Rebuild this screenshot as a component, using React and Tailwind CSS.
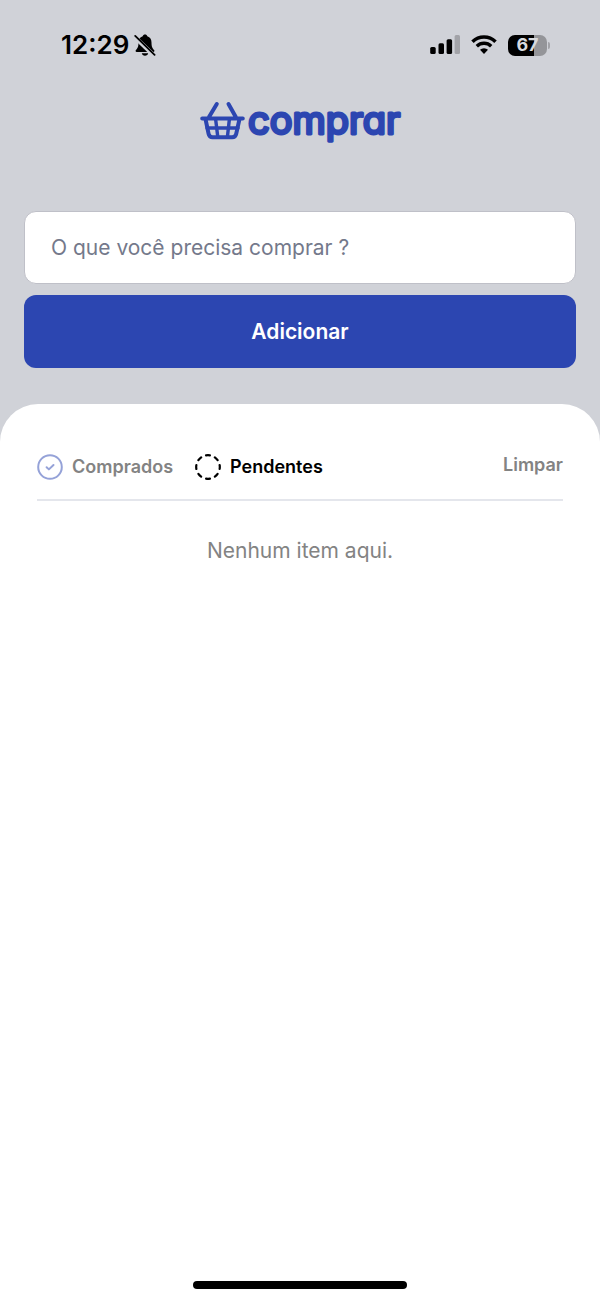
import { useState } from "react";

function MutedBell() {
  return (
    <svg width="22" height="24" viewBox="0 0 22 24" aria-hidden="true">
      <path d="M11 1.600c1.200 0 2 .7 2.300 1.700 2.900.9 4.200 3.200 4.200 6.200 0 4.600 1 5.800 2.600 7.600.7.9.300 1.900-.8 1.900H2.700c-1.100 0-1.500-1-.8-1.900 1.600-1.800 2.600-3 2.600-7.600 0-3 1.300-5.300 4.200-6.200.3-1 1.100-1.700 2.300-1.700z" />
      <path d="M7.800 20.300h6.400c-.2 1.400-1.500 2.500-3.200 2.500s-3-1.100-3.200-2.500z" />
      <path d="M0 3.200 20 22.600" stroke="#d0d2d8" strokeWidth="4.200" />
      <path d="M1.200 2.900 20.600 21.800" stroke="#000" strokeWidth="1.800" strokeLinecap="round" />
    </svg>
  );
}

function Signal() {
  return (
    <svg width="30" height="20" viewBox="0 0 30 20" aria-hidden="true">
      <rect x="0.200" y="12" width="5.500" height="7" rx="1.500" />
      <rect x="8.500" y="8.300" width="5.500" height="10.700" rx="1.500" />
      <rect x="16.600" y="4.200" width="5.500" height="14.800" rx="1.500" />
      <rect x="24.600" y="0" width="5.400" height="19" rx="1.500" fill="#a2a3a8" />
    </svg>
  );
}

function Wifi() {
  return (
    <svg width="26" height="20" viewBox="0 0 26 20" fill="none" stroke="#000" aria-hidden="true">
      <path d="M1.500 6.700a16.500 16.500 0 0 1 23 0" strokeWidth="3.600" />
      <path d="M5.800 11.200a10.300 10.300 0 0 1 14.400 0" strokeWidth="3.400" />
      <path d="M13 19l-4-4.200a5.700 5.700 0 0 1 8 0z" fill="#000" stroke="none" />
    </svg>
  );
}

function Battery() {
  return (
    <div className="flex items-center gap-px" role="img" aria-label="67%">
      <div className="flex h-[21px] w-[39px] items-center justify-center rounded-[7px] bg-linear-to-r from-black from-67% to-[#949599] to-67% font-bold text-lg leading-none text-[#d8dade]">
        67
      </div>
      <div className="h-[7px] w-[2px] rounded-r-full bg-[#a2a3a8]" />
    </div>
  );
}

function Basket() {
  return (
    <svg width="45" height="40" viewBox="0 0 45 40" fill="none" stroke="#2c46b1" strokeWidth="4" strokeLinecap="round" strokeLinejoin="round" aria-hidden="true">
      <path d="M16.800 3 9 16M28.500 3 35.800 16M2.200 17.600H42.800" />
      <path d="M5.500 18 8.600 32.800Q9.300 36.200 12.600 36.200H32.200Q35.500 36.200 36.200 32.800L39.500 18" />
      <path d="M15.600 18 17.800 36M29.400 18 27.400 36M7 27H38" strokeWidth="3.400" />
    </svg>
  );
}

function Wordmark() {
  return (
    <svg width="153" height="44" viewBox="0 0 153 44" fill="#2c46b1" stroke="#2c46b1" strokeWidth="3" strokeLinejoin="round" className="overflow-visible">
      <text x="0" y="35" className="text-[38px] font-normal [font-feature-settings:'cv11']">
        comprar
      </text>
    </svg>
  );
}

function DoneIcon() {
  return (
    <svg width="26" height="26" viewBox="0 0 26 26" fill="none" stroke="#95a2d8" strokeWidth="2" strokeLinecap="round" strokeLinejoin="round" aria-hidden="true">
      <circle cx="13" cy="13" r="11.800" />
      <path d="M9.600 13.200l2.300 2.200 4.600-4.400" />
    </svg>
  );
}

function PendingIcon() {
  return (
    <svg width="26" height="26" viewBox="0 0 26 26" fill="none" stroke="#000" strokeWidth="2.200" strokeLinecap="round" aria-hidden="true">
      <circle cx="13" cy="13" r="11.800" pathLength="80" strokeDasharray="4.200 5.800" transform="rotate(-9.500 13 13)" />
    </svg>
  );
}

export default function App() {
  const [filter, setFilter] = useState("pending");
  const tone = (name) => (filter === name ? "text-black" : "text-[#838383]");
  return (
    <div className="flex min-h-screen flex-col bg-[#d0d2d8] font-['Inter','Liberation_Sans',sans-serif]">
      <div className="flex h-[90px] items-center justify-between pr-[50px] pl-[61px]">
        <div className="flex items-center gap-[5px]">
          <span className="text-[26px] leading-8 font-semibold">12:29</span>
          <MutedBell />
        </div>
        <div className="flex items-center gap-[11px]">
          <Signal />
          <Wifi />
          <Battery />
        </div>
      </div>

      <header className="flex h-[62px] items-center justify-center">
        <h1 className="flex items-center gap-[3px]">
          <Basket />
          <Wordmark />
        </h1>
      </header>

      <form className="mt-[59px] flex flex-col gap-[11px] px-6" onSubmit={(e) => e.preventDefault()}>
        <input
          type="text"
          aria-label="Item"
          placeholder="O que você precisa comprar ?"
          className="h-[73px] w-full rounded-xl border border-[#bfc0c8] bg-white px-[26px] text-[21px] outline-none placeholder:text-[#74798b]"
        />
        <button type="submit" className="h-[73px] w-full rounded-xl bg-[#2c46b1] text-[21px] font-semibold text-white">
          Adicionar
        </button>
      </form>

      <main className="mt-[36px] flex grow flex-col rounded-t-[38px] bg-white px-[37px] pt-[44px] pb-3">
        <div className="flex items-start justify-between border-b-2 border-[#e4e6ec] pb-[13px]">
          <div className="flex gap-[22px]">
            <button type="button" onClick={() => setFilter("done")} className="flex items-center gap-[9px]">
              <DoneIcon />
              <span className={`text-lg font-semibold leading-[38px] ${tone("done")}`}>Comprados</span>
            </button>
            <button type="button" onClick={() => setFilter("pending")} className="flex items-center gap-[9px]">
              <PendingIcon />
              <span className={`text-lg font-semibold leading-[38px] ${tone("pending")}`}>Pendentes</span>
            </button>
          </div>
          <button type="button" className="text-lg leading-[34px] font-semibold text-[#838383]">
            Limpar
          </button>
        </div>
        <p className="mt-[34px] text-center text-[21px] leading-8 text-[#838383]">Nenhum item aqui.</p>
        <div className="mt-auto h-2 w-[214px] self-center rounded-full bg-black" />
      </main>
    </div>
  );
}
